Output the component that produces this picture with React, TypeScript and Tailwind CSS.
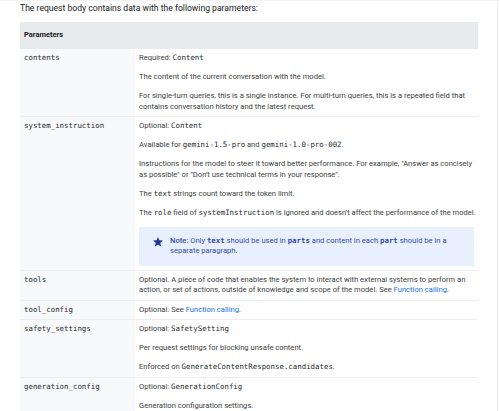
import { ReactNode } from "react";

const Code = ({ children, bold }: { children: ReactNode; bold?: boolean }) => (
  <code className={"font-['DejaVu_Sans_Mono','Liberation_Mono',monospace] text-[7.4px] " + (bold ? "font-bold" : "text-[#262a2e]")}>
    {children}
  </code>
);

const Link = ({ children }: { children: ReactNode }) => <a className="text-[#1a73e8]">{children}</a>;

// one visual line, wrapping kept as in the docs page
const L = ({ children }: { children: ReactNode }) => <span className="block whitespace-nowrap">{children}</span>;

interface Row {
  name: string;
  body: ReactNode[];
}

const rows: Row[] = [
  {
    name: "contents",
    body: [
      <>Required: <Code>Content</Code></>,
      <>The content of the current conversation with the model.</>,
      <>
        <L>For single-turn queries, this is a single instance. For multi-turn queries, this is a repeated field that</L>
        <L>contains conversation history and the latest request.</L>
      </>,
    ],
  },
  {
    name: "system_instruction",
    body: [
      <>Optional: <Code>Content</Code></>,
      <>Available for <Code>gemini-1.5-pro</Code> and <Code>gemini-1.0-pro-002</Code>.</>,
      <>
        <L>Instructions for the model to steer it toward better performance. For example, "Answer as concisely</L>
        <L>as possible" or "Don't use technical terms in your response".</L>
      </>,
      <>The <Code>text</Code> strings count toward the token limit.</>,
      <L>The <Code>role</Code> field of <Code>systemInstruction</Code> is ignored and doesn't affect the performance of the model.</L>,
      <div className="flex items-start gap-[6px] bg-[#e8f0fe] pl-[13px] pr-[10px] py-[9px] text-[#3949ab]">
        <svg viewBox="0 0 24 24" className="w-[12px] h-[12px] shrink-0 fill-[#283593]">
          <path d="M12 17.27 18.18 21l-1.64-7.03L22 9.24l-7.19-.61L12 2 9.19 8.63 2 9.24l5.46 4.73L5.82 21z" />
        </svg>
        <div>
          <L>
            <span className="font-medium">Note:</span> Only <Code bold>text</Code> should be used in <Code bold>parts</Code> and content in each <Code bold>part</Code> should be in a
          </L>
          <L>separate paragraph.</L>
        </div>
      </div>,
    ],
  },
  {
    name: "tools",
    body: [
      <>
        <L>Optional. A piece of code that enables the system to interact with external systems to perform an</L>
        <L>action, or set of actions, outside of knowledge and scope of the model. See <Link>Function calling</Link>.</L>
      </>,
    ],
  },
  {
    name: "tool_config",
    body: [<>Optional. See <Link>Function calling</Link>.</>],
  },
  {
    name: "safety_settings",
    body: [
      <>Optional: <Code>SafetySetting</Code></>,
      <>Per request settings for blocking unsafe content.</>,
      <>Enforced on <Code>GenerateContentResponse.candidates</Code>.</>,
    ],
  },
  {
    name: "generation_config",
    body: [<>Optional: <Code>GenerationConfig</Code></>, <>Generation configuration settings.</>],
  },
];

export default function App() {
  return (
    <div className="w-[500px] h-[411px] overflow-hidden bg-white border-t border-[#f1f3f4] font-['Roboto','Liberation_Sans',sans-serif] text-[#3c4043]">
      <div className="w-[498px] h-full border-r border-[#e8eaed] pl-[20px] pr-[20px]">
        <p className="text-[8.6px] leading-[14px] h-[21px] text-[#202124]">
          The request body contains data with the following parameters:
        </p>
        <table className="w-[458px] table-fixed border-collapse text-[7.6px] leading-[10.5px]">
          <colgroup>
            <col className="w-[115px]" />
            <col />
          </colgroup>
          <thead>
            <tr className="bg-[#e8eaed]">
              <th colSpan={2} className="h-[27px] px-[4px] text-left font-bold text-[7.5px] text-[#202124]">
                Parameters
              </th>
            </tr>
          </thead>
          <tbody>
            {rows.map((r) => (
              <tr key={r.name} className="border-b border-[#eceef0]">
                <td className="bg-[#f8f9fa] align-top px-[4px] py-[4px]">
                  <Code>{r.name}</Code>
                </td>
                <td className="align-top px-[4px] py-[4px]">
                  <div className="flex flex-col gap-[8.5px]">
                    {r.body.map((b, i) => (
                      <div key={i}>{b}</div>
                    ))}
                  </div>
                </td>
              </tr>
            ))}
          </tbody>
        </table>
      </div>
    </div>
  );
}
